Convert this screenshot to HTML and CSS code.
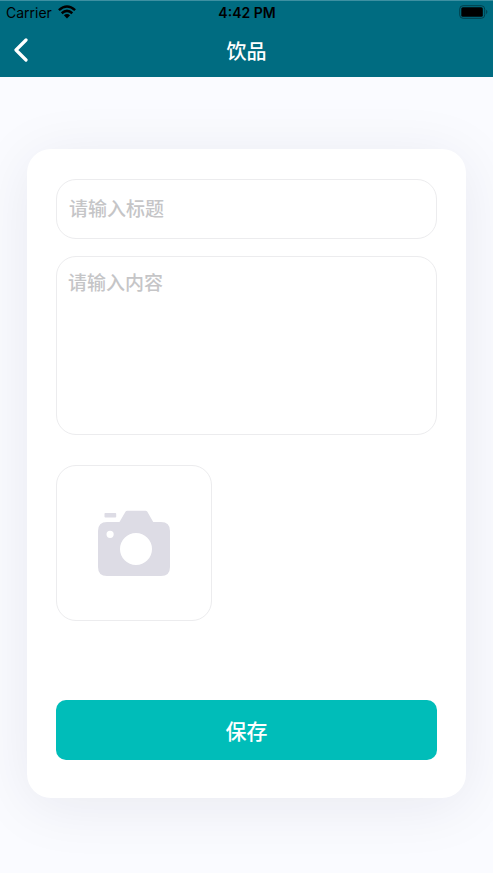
FILE: index.html
```html
<!DOCTYPE html>
<html lang="zh-CN">
<head>
<meta charset="utf-8">
<meta name="viewport" content="width=device-width, initial-scale=1">
<title>饮品</title>
<link rel="stylesheet" href="styles.css">
</head>
<body>
<header class="header">
  <div class="status">
    <div class="status-left">
      <span class="carrier">Carrier</span>
      <svg class="wifi" viewBox="0 0 18 14" aria-hidden="true">
        <path d="M.9 5.2Q9-2.2 17.1 5.2M3.7 8.2Q9 3.6 14.3 8.2" fill="none" stroke="#000" stroke-width="2.5"/>
        <path d="M5.9 10.3Q9 7.8 12.1 10.3L9 13.4Z"/>
      </svg>
    </div>
    <span class="time">4:42 PM</span>
    <svg class="battery" viewBox="0 0 29 14" aria-hidden="true">
      <rect x=".7" y=".7" width="25" height="12.6" rx="3.4" fill="none" stroke="#003f4b"/>
      <rect x="2.3" y="2.3" width="21.5" height="9.4" rx="1.5"/>
      <path d="M27.2 4.8Q29.6 7 27.2 9.2Z" fill="#003f4b"/>
    </svg>
  </div>
  <nav class="nav">
    <button class="back" type="button" aria-label="返回">
      <svg class="back-icon" viewBox="0 0 14 24" aria-hidden="true">
        <path d="M12 2L2 12L12 22" fill="none" stroke="#fff" stroke-width="3.2" stroke-linecap="round" stroke-linejoin="round"/>
      </svg>
    </button>
    <h1 class="title">饮品</h1>
  </nav>
</header>
<main class="main">
  <form class="card">
    <input class="field" type="text" placeholder="请输入标题" aria-label="标题">
    <textarea class="field field-body" placeholder="请输入内容" aria-label="内容"></textarea>
    <button class="photo" type="button" aria-label="添加照片">
      <svg class="camera" viewBox="0 0 72 66" aria-hidden="true">
        <path fill="#dddce5" fill-rule="evenodd" d="M9 12H21.5L27.6 1.6Q28.2 .7 29.3 .7H47.5Q48.6 .7 49.2 1.6L55.2 12H63Q72 12 72 21V57Q72 66 63 66H9Q0 66 0 57V21Q0 12 9 12ZM22 39a16 16 0 1 0 32 0a16 16 0 1 0-32 0ZM8.5 24.3a3.6 3.6 0 1 0 7.2 0a3.6 3.6 0 1 0-7.2 0Z"/>
        <rect x="6.5" y="3" width="11.7" height="4.5" rx=".8" fill="#dddce5"/>
      </svg>
    </button>
    <button class="save" type="submit">保存</button>
  </form>
</main>
</body>
</html>
```
FILE: styles.css
```css
* {
  box-sizing: border-box;
}

body {
  margin: 0;
  min-height: 100vh;
  background: #fafbff;
  font-family: Inter, "Noto Sans CJK SC", sans-serif;
}

button {
  padding: 0;
  border: 0;
  background: none;
  cursor: pointer;
}

.header {
  border-top: 1px solid #3d90a2;
  background: #006c81;
}

.status {
  display: grid;
  grid-template-columns: 1fr auto 1fr;
  align-items: center;
  height: 22px;
  padding: 0 5px 0 6px;
  font-size: 14px;
  color: #000;
}

.status-left {
  display: flex;
  align-items: center;
  gap: 6px;
}

.wifi {
  width: 18px;
  height: 14px;
}

.time {
  font-weight: 600;
}

.battery {
  justify-self: end;
  width: 29px;
  height: 14px;
}

.nav {
  display: grid;
  grid-template-columns: 1fr auto 1fr;
  align-items: center;
  height: 54px;
  padding: 0 14px;
}

.back {
  display: flex;
  justify-self: start;
}

.back-icon {
  width: 14px;
  height: 24px;
}

.title {
  margin: 0;
  font-size: 20px;
  font-weight: 500;
  color: #fff;
}

.main {
  padding: 72px 27px;
}

.card {
  display: flex;
  flex-direction: column;
  padding: 30px 29px 38px;
  border-radius: 24px;
  background: #fff;
  box-shadow: 0 8px 60px rgba(30, 30, 60, 0.08);
}

.field {
  width: 100%;
  height: 60px;
  margin: 0 0 17px;
  padding: 0 12px;
  border: 1px solid #ececee;
  border-radius: 20px;
  outline: 0;
  background: #fff;
  font-family: inherit;
  font-size: 19px;
  font-weight: 500;
  line-height: 28px;
  color: #333;
  resize: none;
}

.field::placeholder {
  color: #c5c5c7;
  opacity: 1;
}

.field-body {
  height: 179px;
  margin-bottom: 30px;
  padding: 13px 11px;
}

.photo {
  display: flex;
  align-items: center;
  justify-content: center;
  width: 156px;
  height: 156px;
  margin-bottom: 79px;
  border: 1px solid #ececee;
  border-radius: 20px;
}

.camera {
  width: 72px;
  height: 66px;
}

.save {
  height: 60px;
  border-radius: 10px;
  background: #00bdb9;
  font-family: inherit;
  font-size: 21px;
  font-weight: 500;
  color: #fff;
}
```
